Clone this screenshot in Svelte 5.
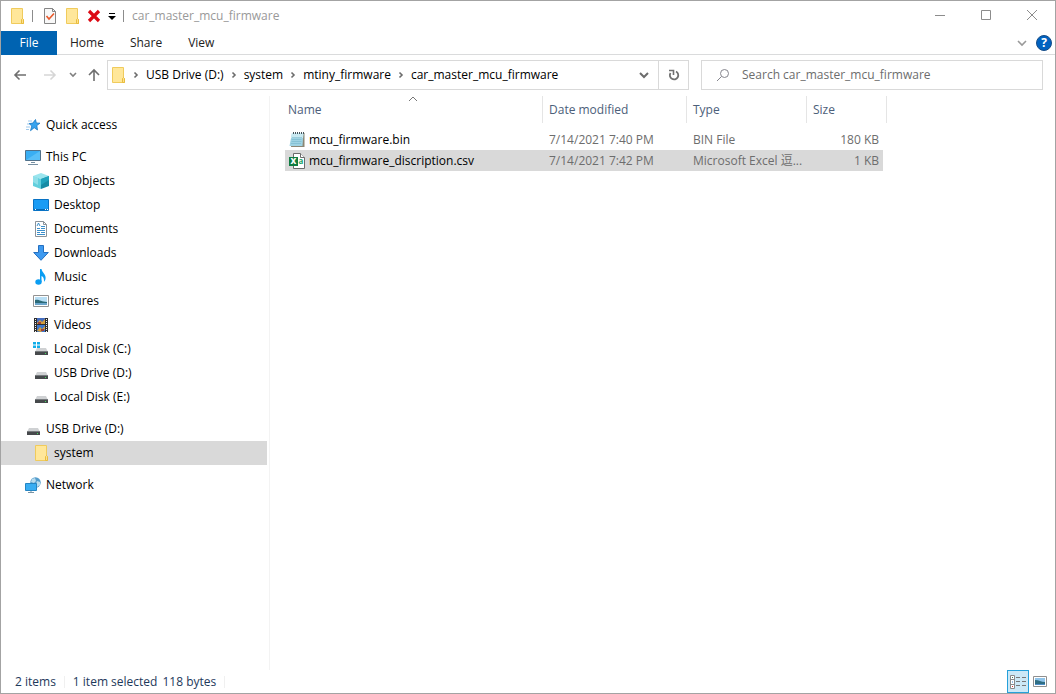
<script lang="ts">
  type TreeItem = { label: string; icon: string; child?: boolean }

  const crumbs = ['USB Drive (D:)', 'system', 'mtiny_firmware', 'car_master_mcu_firmware']
  const folderName = crumbs[crumbs.length - 1]

  const groups: TreeItem[][] = [
    [{ label: 'Quick access', icon: 'star' }],
    [
      { label: 'This PC', icon: 'pc' },
      { label: '3D Objects', icon: 'cube', child: true },
      { label: 'Desktop', icon: 'desktop', child: true },
      { label: 'Documents', icon: 'document', child: true },
      { label: 'Downloads', icon: 'download', child: true },
      { label: 'Music', icon: 'music', child: true },
      { label: 'Pictures', icon: 'picture', child: true },
      { label: 'Videos', icon: 'video', child: true },
      { label: 'Local Disk (C:)', icon: 'windisk', child: true },
      { label: 'USB Drive (D:)', icon: 'disk', child: true },
      { label: 'Local Disk (E:)', icon: 'disk', child: true },
    ],
    [
      { label: 'USB Drive (D:)', icon: 'disk' },
      { label: 'system', icon: 'folder', child: true },
    ],
    [{ label: 'Network', icon: 'network' }],
  ]

  const files = [
    { name: 'mcu_firmware.bin', icon: 'notepad', date: '7/14/2021 7:40 PM', type: 'BIN File', size: '180 KB' },
    { name: 'mcu_firmware_discription.csv', icon: 'excel', date: '7/14/2021 7:42 PM', type: 'Microsoft Excel 逗...', size: '1 KB' },
  ]

  let activeNode = $state('system')
  let selected = $state('mcu_firmware_discription.csv')
  let query = $state('')
</script>

{#snippet icon(name: string)}
  <svg class="icon" width="16" height="16" viewBox="0 0 16 16" aria-hidden="true">
    {#if name === 'folder'}
      <path d="M2.5.5h11v10l1 1v4h-12z" fill="#ffe79a" stroke="#f0cb5c" />
      <path d="M12.5 15.5v-4l1-1 1 1v4z" fill="#ffe08a" stroke="#e8bd3f" />
    {:else if name === 'star'}
      <path d="M3 4h4M2 7h4M1 10h4M1 12.500h3" stroke="#9fc9ec" />
      <path d="M10.500 2.500l.8 3.500 3.700.2-3.200 2.300.7 4.500-3.300-2.300-3.700 3 1.300-4.700-2.600-2.400 3.600-.5z" fill="#36a3ee" stroke="#1878c4" stroke-width=".8" />
    {:else if name === 'pc'}
      <path d="M.5 1.500h15v10H.5z" fill="#39aef3" stroke="#51718a" />
      <path d="M1 11l14-9v9z" fill="#65c6fa" opacity=".7" />
      <path d="M6 13.500h4M3 15.500h10" stroke="#7790a3" />
    {:else if name === 'cube'}
      <path d="M0 3l8-3 8 3-8 3z" fill="#9be5ee" />
      <path d="M0 3l8 3v10l-8-3z" fill="#62cfdd" />
      <path d="M16 3l-8 3v10l8-3z" fill="#168ba5" />
      <path d="M0 3l5 2v7l-5-3z" fill="#8fdfe9" />
      <path d="M16 3l-8 3v6l8-5z" fill="#1fa3bd" />
    {:else if name === 'desktop'}
      <path d="M.5 2.500h15v11H.5z" fill="#1a9cf5" stroke="#0872c4" />
      <path d="M1 12.500h14" stroke="#0869b4" />
      <path d="M2 12.500h1M12 12.500h1M14 12.500h1" stroke="#fff" />
    {:else if name === 'document'}
      <path d="M2.500.500h8l3 3v12h-11z" fill="#fff" stroke="#8b9299" />
      <path d="M10.500.500v3h3" fill="none" stroke="#8b9299" />
      <path d="M4 5l1.500-3 1.500 3M4 7.500h3M8 5.500h4M8 7.500h4M4 9.500h8M4 11.500h3M8 11.500h4M4 13.500h8" fill="none" stroke="#3c8fcb" />
    {:else if name === 'download'}
      <path d="M5.500.500h5v7h4.800L8 15.300.700 7.500h4.800z" fill="#3e9af0" stroke="#246fc0" />
    {:else if name === 'music'}
      <path d="M7 0h1.500c.500 4 5 5 4 10-.300 1.500-1 2-1.500 3 .200-3.500-.500-5-2.500-6v6h-1.500z" fill="#0a9df2" />
      <ellipse cx="5.500" cy="13" rx="3.200" ry="2.700" fill="#0a9df2" />
    {:else if name === 'picture'}
      <path d="M.5 2.500h15v11H.5z" fill="#fff" stroke="#929292" />
      <path d="M2 4h12v8H2z" fill="#b9dff5" />
      <path d="M2 7c4-1 6 2 12 2v1H2z" fill="#2c6a78" />
      <path d="M2 10h12v2H2z" fill="#6aa5cb" />
    {:else if name === 'video'}
      <path d="M1 1h14v14H1z" fill="#2e2e2e" />
      <path d="M2.500 2v13M13.500 2v13" stroke="#f5f5f5" stroke-width="1" stroke-dasharray="1 1" />
      <path d="M4 1h8v6H4z" fill="#456dbf" />
      <path d="M4 8h8v7H4z" fill="#3d78cd" />
      <path d="M4 6l3-3 2 2 3-3v5H4zM4 14l3-4 2 2 3-3v3l-4 3z" fill="#d29d3c" />
      <path d="M5 5h3v2H5zM8 12h3v2H8z" fill="#a14338" />
    {:else if name === 'disk' || name === 'windisk'}
      {#if name === 'windisk'}
        <path d="M0 1h3v2.500H0zM4 1h3v2.500H4zM0 4.500h3V7H0zM4 4.500h3V7H4z" fill="#11aee9" />
      {/if}
      <path d="M4 7h9l2 4H2z" fill="#cfd1d3" />
      <path d="M2 10.500h13V14H2z" fill="#46494c" />
      <path d="M2 10.500h13" stroke="#777b7e" />
      <path d="M12 12h1v1h-1z" fill="#41df5c" />
    {:else if name === 'network'}
      <circle cx="10.500" cy="5.500" r="5.200" fill="#549dcc" />
      <path d="M7 2l3-1 1 3-2 2-3-1zM12 4l3 1v3l-3 2-1-3z" fill="#b9dcee" />
      <path d="M.500 6.500h11v7H.500z" fill="#39adf2" stroke="#2485c3" />
      <path d="M6 14v1M3 15.500h6" stroke="#7894a6" />
    {:else if name === 'notepad'}
      <path d="M4 1h11.500v14H2z" fill="#8c8775" />
      <path d="M3 1h11.500l-1 13H.500z" fill="#9fd3e3" />
      <path d="M3 1h11.500l-.500 5H2z" fill="#c8e9f1" />
      <path d="M3 5.500h10M2.500 7.500h10M2.500 9.500h10M2 11.500h10" stroke="#6cb0c7" stroke-width=".5" />
      <path d="M4 1h11" stroke="#47545b" stroke-width="2" stroke-dasharray="1 1" />
    {:else if name === 'excel'}
      <path d="M4.500.500h7l4 4v11h-11z" fill="#fff" stroke="#6b6b6b" />
      <path d="M11.500.500v4h4" fill="#fff" stroke="#6b6b6b" />
      <path d="M0 4h9v9H0z" fill="#107c41" />
      <text x="4.500" y="11" text-anchor="middle" fill="#fff" font-size="10" font-weight="700">x</text>
      <text x="12" y="11" text-anchor="middle" fill="#21a366" font-size="8" font-weight="700">a</text>
    {/if}
  </svg>
{/snippet}

{#snippet chevron(direction: 'right' | 'down' | 'up')}
  <svg class="chevron" width="10" height="10" viewBox="0 0 10 10" aria-hidden="true">
    {#if direction === 'right'}
      <path d="M3.500 2.500L6 5 3.500 7.500" />
    {:else if direction === 'down'}
      <path d="M1 3l4 4 4-4" />
    {:else}
      <path d="M1 7l4-4 4 4" />
    {/if}
  </svg>
{/snippet}

<div class="window">
  <header class="titlebar">
    <div class="quick">
      {@render icon('folder')}
      <span class="rule"></span>
      <button type="button" aria-label="Properties">
        <svg width="14" height="17" viewBox="0 0 14 17">
          <path d="M1.500.500h8l3 3v12h-11z" fill="#f8f8f8" stroke="#858585" />
          <path d="M9.500.500v3h3" fill="none" stroke="#858585" />
          <path d="M3.500 8l2.500 3 5-5.500" fill="none" stroke="#e8592b" stroke-width="1.600" />
        </svg>
      </button>
      <button type="button" aria-label="New folder">{@render icon('folder')}</button>
      <button type="button" aria-label="Delete">
        <svg width="14" height="14" viewBox="0 0 14 14">
          <path d="M2 2l10 10M12 2L2 12" stroke="#dc0a14" stroke-width="3.200" />
        </svg>
      </button>
      <button type="button" class="customize" aria-label="Customize Quick Access Toolbar">
        <svg width="8" height="8" viewBox="0 0 8 8"><path d="M1 1.500h6" stroke="#000" /><path d="M0 4h8L4 8z" /></svg>
      </button>
      <span class="rule"></span>
    </div>
    <h1>{folderName}</h1>
    <div class="caption">
      <button type="button" aria-label="Minimize">
        <svg width="12" height="12" viewBox="0 0 12 12"><path d="M1 5.500h10" /></svg>
      </button>
      <button type="button" aria-label="Maximize">
        <svg width="12" height="12" viewBox="0 0 12 12"><path d="M1.500.500h9v9h-9z" /></svg>
      </button>
      <button type="button" aria-label="Close">
        <svg width="12" height="12" viewBox="0 0 12 12"><path d="M1 0l10 10M11 0L1 10" /></svg>
      </button>
    </div>
  </header>

  <div class="ribbon">
    <button type="button" class="file">File</button>
    <button type="button">Home</button>
    <button type="button">Share</button>
    <button type="button">View</button>
    <div class="ribbon-end">
      <button type="button" class="expand" aria-label="Expand the Ribbon">{@render chevron('down')}</button>
      <button type="button" class="help" aria-label="Help">
        <svg width="16" height="16" viewBox="0 0 16 16">
          <circle cx="8" cy="8" r="7.500" fill="#0062c0" stroke="#174d87" />
          <text x="8" y="12" text-anchor="middle" fill="#fff" font-size="12" font-weight="700">?</text>
        </svg>
      </button>
    </div>
  </div>

  <div class="navbar">
    <div class="history">
      <button type="button" aria-label="Back">
        <svg width="14" height="14" viewBox="0 0 14 14"><path d="M13 7H2M6.500 2.500L2 7l4.500 4.500" stroke="#6f6f6f" stroke-width="1.600" /></svg>
      </button>
      <button type="button" class="forward" aria-label="Forward" disabled>
        <svg width="14" height="14" viewBox="0 0 14 14"><path d="M1 7h11M7.500 2.500L12 7l-4.500 4.500" stroke="#d6d6d6" stroke-width="1.600" /></svg>
      </button>
      <button type="button" class="recent" aria-label="Recent locations">
        <svg width="8" height="8" viewBox="0 0 8 8"><path d="M1 2l3 3 3-3" stroke="#808080" stroke-width="1.600" /></svg>
      </button>
      <button type="button" aria-label="Up">
        <svg width="14" height="14" viewBox="0 0 14 14"><path d="M7 13V2M2 7l5-5 5 5" stroke="#6f6f6f" stroke-width="1.600" /></svg>
      </button>
    </div>
    <div class="address">
      {@render icon('folder')}
      {#each crumbs as crumb}
        <span class="arrow">{@render chevron('right')}</span>
        <button type="button" class="crumb">{crumb}</button>
      {/each}
      <button type="button" class="previous" aria-label="Previous locations">{@render chevron('down')}</button>
      <button type="button" class="refresh" aria-label="Refresh">
        <svg width="12" height="12" viewBox="0 0 12 12">
          <path d="M8 2.500A4.200 4.200 0 1 1 2.500 4" stroke="#707070" stroke-width="1.800" />
          <path d="M1 1.500h4.500V6" stroke="#707070" stroke-width="1.600" />
        </svg>
      </button>
    </div>
    <label class="search">
      <svg width="14" height="14" viewBox="0 0 14 14" aria-hidden="true">
        <circle cx="8.500" cy="5.500" r="4" /><path d="M5.500 8.500L1 13" />
      </svg>
      <input type="text" aria-label="Search" placeholder="Search {folderName}" bind:value={query} />
    </label>
  </div>

  <div class="body">
    <nav class="tree" aria-label="Navigation pane">
      {#each groups as group}
        <ul>
          {#each group as item}
            <li>
              <button
                type="button"
                class:child={item.child}
                class:active={activeNode === item.label}
                onclick={() => (activeNode = item.label)}
              >
                {@render icon(item.icon)}
                {item.label}
              </button>
            </li>
          {/each}
        </ul>
      {/each}
    </nav>

    <main>
      <table>
        <colgroup>
          <col class="col-name" />
          <col class="col-date" />
          <col class="col-type" />
          <col class="col-size" />
        </colgroup>
        <thead>
          <tr>
            <th class="sorted" aria-sort="ascending">Name<span class="sort">{@render chevron('up')}</span></th>
            <th>Date modified</th>
            <th>Type</th>
            <th>Size</th>
          </tr>
        </thead>
        <tbody>
          {#each files as file}
            <tr class:selected={selected === file.name} onclick={() => (selected = file.name)}>
              <td><span class="name">{@render icon(file.icon)}{file.name}</span></td>
              <td>{file.date}</td>
              <td>{file.type}</td>
              <td class="size">{file.size}</td>
            </tr>
          {/each}
        </tbody>
      </table>
    </main>
  </div>

  <footer>
    <span class="count">2 items</span>
    <span class="selection"><span>1 item selected</span><span>118 bytes</span></span>
    <div class="views">
      <button type="button" class="current" aria-label="Details view">
        <svg width="16" height="14" viewBox="0 0 16 14">
          <path d="M.500.500h4v13h-4zM.500 4.500h4M.500 9.500h4" fill="#fff" stroke="#8a8a8a" />
          <path d="M6 2.500h4M12 2.500h4M6 6.500h4M12 6.500h4M6 10.500h4M12 10.500h4" stroke="#777" />
          <path d="M2 2.500h1" stroke="#3b7a57" /><path d="M2 7h1" stroke="#2f86d0" /><path d="M2 11.500h1" stroke="#d33" />
        </svg>
      </button>
      <button type="button" aria-label="Large icons view">
        <svg width="14" height="11" viewBox="0 0 14 11">
          <path d="M.500.500h13v10H.500z" fill="#fff" stroke="#8f8f8f" />
          <path d="M2 2h10v7H2z" fill="#8fc4ea" />
          <path d="M2 4c4 0 6 2 10 2v3H2z" fill="#2f6d83" />
          <path d="M2 8h10v1H2z" fill="#4e8fc8" />
        </svg>
      </button>
    </div>
  </footer>
</div>

<style>
  :global(body) {
    margin: 0;
  }

  .window {
    box-sizing: border-box;
    min-height: 100vh;
    display: flex;
    flex-direction: column;
    border: 1px solid #a3a3a3;
    background: #fff;
    color: #000;
    font: 12px/16px 'Open Sans', 'Noto Sans CJK SC', sans-serif;
    white-space: nowrap;
  }

  button {
    display: flex;
    align-items: center;
    justify-content: center;
    border: 0;
    padding: 0;
    background: none;
    color: inherit;
    font: inherit;
  }

  svg {
    display: block;
    flex: none;
  }

  .chevron path {
    fill: none;
    stroke: #6c6c6c;
    stroke-width: 1.6;
  }

  .titlebar {
    height: 30px;
    display: flex;
    align-items: center;
  }

  .quick {
    display: flex;
    align-items: center;
    gap: 7px;
    padding-left: 8px;
  }

  .rule {
    width: 1px;
    height: 12px;
    background: #8c8c8c;
  }

  .quick .rule:first-of-type {
    margin-right: 3px;
  }

  h1 {
    margin: 0 0 0 8px;
    color: #999;
    font-size: 12px;
    font-weight: 400;
  }

  .caption {
    margin-left: auto;
    display: flex;
  }

  .caption button {
    width: 46px;
    height: 30px;
  }

  .caption path {
    fill: none;
    stroke: #8c8c8c;
  }

  .ribbon {
    height: 23px;
    display: flex;
    border-bottom: 1px solid #dadbdc;
    color: #222;
  }

  .ribbon > button {
    padding: 0 13px;
  }

  .ribbon > .file {
    width: 56px;
    margin-bottom: -1px;
    background: #0063b1;
    color: #fff;
  }

  .ribbon-end {
    margin-left: auto;
    display: flex;
    align-items: center;
    gap: 9px;
    padding-right: 3px;
  }

  .expand path {
    stroke: #999;
  }

  .navbar {
    display: flex;
    align-items: center;
    padding: 5px 12px;
  }

  .history {
    width: 94px;
    display: flex;
    gap: 12px;
  }

  .forward {
    margin-left: 4px;
  }

  .recent {
    margin-right: -2px;
  }

  .history path,
  .refresh path {
    fill: none;
  }

  .address {
    flex: 17 1 582px;
    box-sizing: border-box;
    height: 30px;
    display: flex;
    align-items: center;
    border: 1px solid #d9d9d9;
    padding-left: 2px;
  }

  .arrow {
    width: 20px;
    display: flex;
    justify-content: center;
  }

  .previous {
    margin-left: auto;
    width: 28px;
    height: 28px;
  }

  .previous path {
    stroke-width: 2;
  }

  .refresh {
    width: 30px;
    height: 28px;
    border-left: 1px solid #d9d9d9;
  }

  .search {
    flex: 10 1 342px;
    box-sizing: border-box;
    height: 30px;
    display: flex;
    align-items: center;
    gap: 12px;
    margin-left: 12px;
    border: 1px solid #d9d9d9;
    padding-left: 14px;
  }

  .search svg {
    fill: none;
    stroke: #85858d;
  }

  input {
    flex: 1;
    min-width: 0;
    border: 0;
    padding: 0;
    outline: 0;
    background: none;
    font: inherit;
  }

  input::placeholder {
    color: #6d6d6d;
    opacity: 1;
  }

  .body {
    flex: 1;
    display: flex;
    padding-top: 1px;
  }

  .tree {
    width: 266px;
    border-right: 1px solid #f3f3f3;
    padding: 17px 2px 0 0;
  }

  ul {
    margin: 0 0 8px;
    padding: 0;
    list-style: none;
  }

  .tree button {
    width: 100%;
    height: 24px;
    justify-content: flex-start;
    gap: 5px;
    padding-left: 24px;
  }

  .tree button.child {
    padding-left: 32px;
  }

  .tree button.active {
    background: #d9d9d9;
  }

  main {
    flex: 1;
    padding-left: 15px;
  }

  table {
    width: 602px;
    table-layout: fixed;
    border-collapse: separate;
    border-spacing: 0;
  }

  .col-name {
    width: 258px;
  }

  .col-date {
    width: 144px;
  }

  .col-type {
    width: 120px;
  }

  .col-size {
    width: 80px;
  }

  th {
    height: 27px;
    box-sizing: border-box;
    border-right: 1px solid #e5e5e5;
    padding: 0 0 0 6px;
    color: #4c607a;
    font-weight: 400;
    text-align: left;
  }

  .sorted {
    position: relative;
    padding-left: 3px;
  }

  .sort {
    position: absolute;
    top: -2px;
    left: calc(50% - 6px);
  }

  .sort path {
    stroke: #777;
    stroke-width: 1;
  }

  tbody::before {
    content: '';
    display: block;
    height: 6px;
  }

  td {
    height: 21px;
    overflow: hidden;
    padding: 0 0 0 6px;
    color: #6d6d6d;
  }

  td:first-child {
    padding-left: 4px;
    color: #000;
  }

  .name {
    display: flex;
    align-items: center;
    gap: 4px;
  }

  td.size {
    border-right: 4px solid transparent;
    padding-right: 4px;
    background-clip: padding-box;
    text-align: right;
  }

  .selected td {
    background-color: #d9d9d9;
  }

  footer {
    height: 23px;
    display: flex;
    align-items: center;
    color: #1e395b;
  }

  .count,
  .selection {
    border-right: 1px solid #f0f0f0;
    line-height: 12px;
  }

  .count {
    padding: 0 8px 0 14px;
  }

  .selection {
    display: flex;
    gap: 5px;
    padding: 0 8px;
  }

  .views {
    margin-left: auto;
    display: flex;
    gap: 4px;
    padding-right: 8px;
  }

  .views .current {
    width: 22px;
    height: 23px;
    box-sizing: border-box;
    border: 1px solid #26a0da;
    background: #cce8f6;
  }
</style>
